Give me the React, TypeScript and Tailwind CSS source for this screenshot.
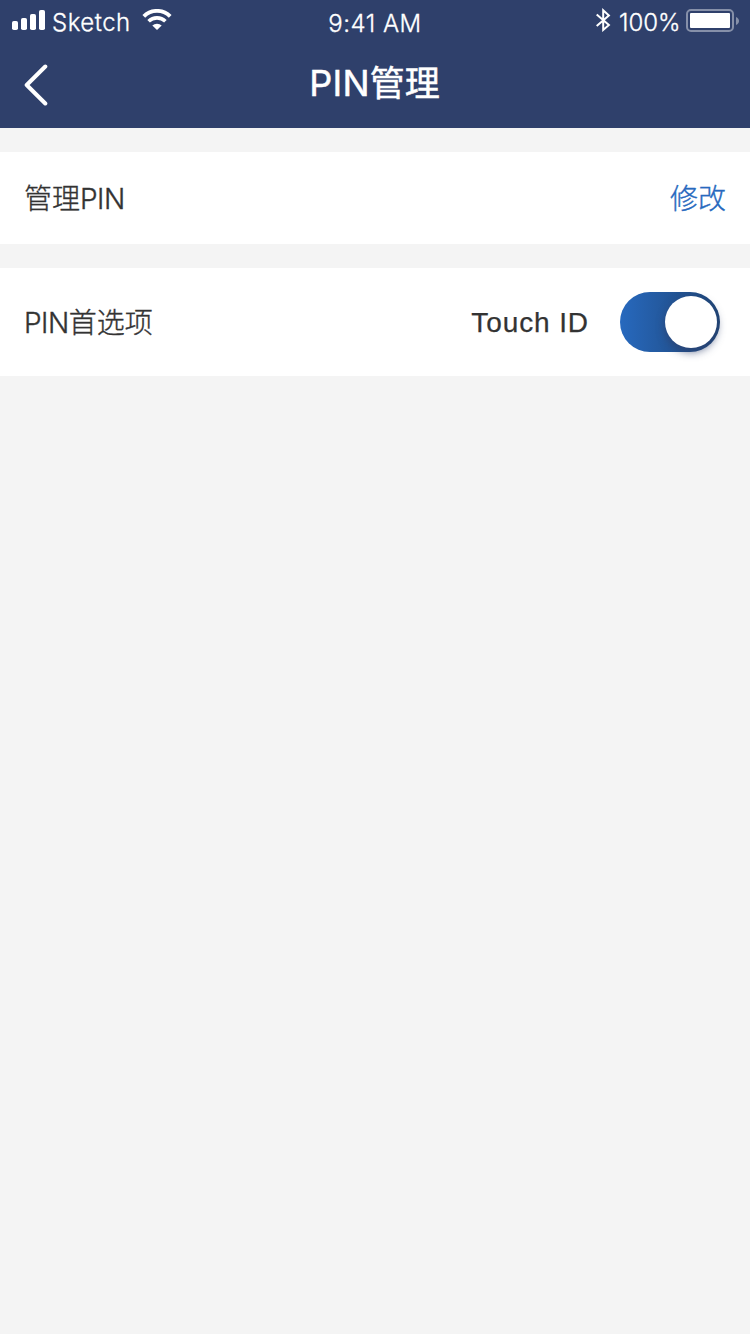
import React from "react";

function SignalIcon() {
  return (
    <svg width="34" height="20" viewBox="0 0 34 20" fill="#fff" className="block">
      <rect x="0" y="11" width="6" height="9" rx="1.8" />
      <rect x="9" y="8" width="6" height="12" rx="1.8" />
      <rect x="18" y="4" width="6" height="16" rx="1.8" />
      <rect x="27" y="0" width="6" height="20" rx="1.8" />
    </svg>
  );
}

function WifiIcon() {
  return (
    <svg width="30" height="21" viewBox="0 0 30 21" fill="none" stroke="#fff" className="block">
      <path d="M1.8 7.300a18.800 18.800 0 0 1 26.400 0" strokeWidth="3.9" />
      <path d="M6.600 12.300a11.900 11.900 0 0 1 16.800 0" strokeWidth="3.6" />
      <path d="M10.300 16.600a6.700 6.700 0 0 1 9.400 0L15 21Z" fill="#fff" stroke="none" />
    </svg>
  );
}

function BluetoothIcon() {
  return (
    <svg width="16" height="24" viewBox="0 0 16 24" fill="none" stroke="#fff" strokeWidth="2" className="block">
      <path d="M1.700 6.400 13.900 17 8.200 21.900V2.300l5.700 5.100L1.700 18" />
    </svg>
  );
}

function BatteryIcon() {
  return (
    <svg width="54" height="24" viewBox="0 0 54 24" className="block">
      <rect x="1" y="1" width="46" height="21" rx="4" fill="none" stroke="#fff" strokeOpacity=".42" strokeWidth="2" />
      <rect x="4" y="4" width="40" height="15" rx="1" fill="#fff" />
      <path d="M50 8c4 1.4 4 6.600 0 8Z" fill="#fff" fillOpacity=".42" />
    </svg>
  );
}

function StatusBar() {
  return (
    <div className="grid h-10 grid-cols-3 text-[24px] leading-[28px] font-light whitespace-nowrap [-webkit-text-stroke:0.3px_#fff]">
      <div className="flex items-start pl-3">
        <div className="pt-2.5"><SignalIcon /></div>
        <span className="w-[90px] pt-[9px] pl-1.5 tracking-[0.5px]">Sketch</span>
        <div className="pt-[9px] pl-1.5"><WifiIcon /></div>
      </div>
      <div className="flex justify-center pt-2.5 tracking-[0.5px]">9:41 AM</div>
      <div className="flex items-start justify-end">
        <div className="pt-2"><BluetoothIcon /></div>
        <span className="w-[75px] pt-[9px] pl-2">100%</span>
        <div className="w-[64px] pt-[9px]"><BatteryIcon /></div>
      </div>
    </div>
  );
}

function Toggle() {
  return (
    <button
      type="button"
      role="switch"
      aria-checked="true"
      aria-label="Touch ID"
      className="flex h-[60px] w-[100px] items-center justify-end rounded-full bg-linear-to-r from-[#2769be] to-[#1e4475] pr-[3px]"
    >
      <span className="block size-[52px] rounded-full bg-white shadow-[0_4px_8px_rgba(46,63,107,0.7)]" />
    </button>
  );
}

export default function App() {
  return (
    <div className="min-h-[1334px] w-full bg-[#f4f4f4] font-['Inter','Noto_Sans_CJK_SC',sans-serif] text-[#333]">
      <header className="h-32 bg-[#2f406b] text-white">
        <StatusBar />
        <div className="grid h-[88px] grid-cols-[48px_1fr_48px]">
          <button type="button" aria-label="返回" className="flex justify-end pt-6">
            <svg width="25" height="42" viewBox="0 0 25 42" fill="none" stroke="#fff" strokeWidth="4" strokeLinecap="round" strokeLinejoin="round">
              <path d="M22.300 2.500 3.700 21l18.600 18.500" />
            </svg>
          </button>
          <h1 className="pt-[19px] pr-px text-center text-[36px] leading-[48px] font-normal [-webkit-text-stroke:0.5px_#fff]">
            <span className="tracking-[0.3px]">PIN</span><span className="text-[35px]">管理</span>
          </h1>
        </div>
      </header>
      <main className="flex flex-col gap-6 pt-6 text-[28px] leading-10 font-light">
        <section className="flex h-[92px] items-center justify-between bg-white px-6 pt-0.5">
          <span className="[-webkit-text-stroke:0.35px_#333]">管理<span className="tracking-[-0.5px]">PIN</span></span>
          <button type="button" className="text-[#2769be] [-webkit-text-stroke:0.35px_#2769be]">修改</button>
        </section>
        <section className="flex h-[108px] items-center bg-white pr-[30px] pl-6">
          <span className="pt-0.5 [-webkit-text-stroke:0.35px_#333]"><span className="tracking-[-0.5px]">PIN</span>首选项</span>
          <span className="mr-[31px] ml-auto pt-0.5 font-['Liberation_Sans'] font-normal tracking-[0.9px] [-webkit-text-stroke:0.25px_#333]">Touch ID</span>
          <Toggle />
        </section>
      </main>
    </div>
  );
}
